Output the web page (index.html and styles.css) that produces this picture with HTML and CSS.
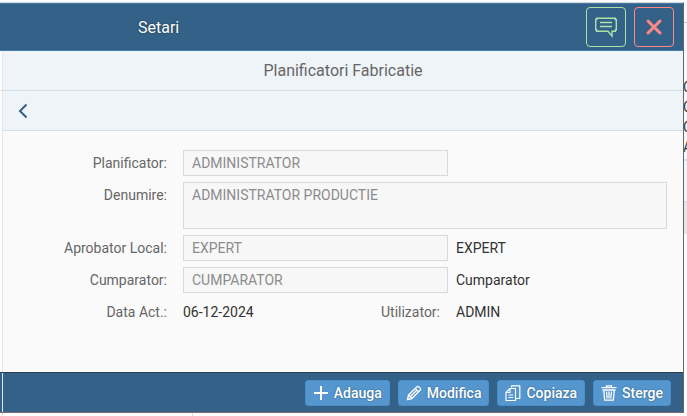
FILE: index.html
```html
<!DOCTYPE html>
<html lang="ro">
<head>
    <meta charset="UTF-8">
    <meta name="viewport" content="width=device-width, initial-scale=1.0">
    <title>Setari - Planificatori Fabricatie</title>
    <link rel="stylesheet" href="styles.css">
</head>
<body>
    <main class="dialog">
        <header class="dialog-header">
            <h1 class="dialog-title">Setari</h1>
            <div class="header-actions">
                <button class="icon-button message" type="button" aria-label="Mesaje">
                    <svg width="24" height="24" viewBox="0 0 24 24" fill="none" stroke="currentColor" stroke-width="1.4">
                        <path d="M2.7 3.2h18.6v1.3h1v10.500h-1v1.300h-3.300v4.700l-4-4.700H2.700v-1.300h-1V4.500h1z"/>
                        <path d="M6 7.500h12M6 11.500h12"/>
                    </svg>
                </button>
                <button class="icon-button close" type="button" aria-label="Inchide">
                    <svg width="24" height="24" viewBox="0 0 24 24" fill="none" stroke="currentColor" stroke-width="3" stroke-linecap="round">
                        <path d="M6 6l12 12M18 6L6 18"/>
                    </svg>
                </button>
            </div>
        </header>

        <div class="dialog-body">
            <div class="bar">
                <h2 class="bar-title">Planificatori Fabricatie</h2>
            </div>
            <nav class="bar nav-bar">
                <button class="back-button" type="button" aria-label="Inapoi">
                    <svg width="16" height="16" viewBox="0 0 16 16" fill="none" stroke="currentColor" stroke-width="2">
                        <path d="M11.500 1.500L5 8l6.500 6.500"/>
                    </svg>
                </button>
            </nav>

            <form class="form" id="planner">
                <div class="form-row">
                    <label for="planificator">Planificator:</label>
                    <input type="text" id="planificator" value="ADMINISTRATOR" disabled>
                </div>
                <div class="form-row">
                    <label for="denumire">Denumire:</label>
                    <textarea id="denumire" disabled>ADMINISTRATOR PRODUCTIE</textarea>
                </div>
                <div class="form-row">
                    <label for="aprobator">Aprobator Local:</label>
                    <input type="text" id="aprobator" value="EXPERT" disabled>
                    <span>EXPERT</span>
                </div>
                <div class="form-row">
                    <label for="cumparator">Cumparator:</label>
                    <input type="text" id="cumparator" value="CUMPARATOR" disabled>
                    <span>Cumparator</span>
                </div>
                <div class="form-row">
                    <span class="label">Data Act.:</span>
                    <div class="split">
                        <span>06-12-2024</span>
                        <span class="label">Utilizator:</span>
                    </div>
                    <span>ADMIN</span>
                </div>
            </form>
        </div>

        <footer class="dialog-footer">
            <div class="footer-actions">
                <button class="action" type="button">
                    <svg width="16" height="16" viewBox="0 0 16 16" fill="none" stroke="currentColor" stroke-width="2">
                        <path d="M8 1v14M1 8h14"/>
                    </svg>
                    Adauga
                </button>
                <button class="action" type="button">
                    <svg width="16" height="16" viewBox="0 0 16 16" fill="none" stroke="currentColor" stroke-width="1.3" stroke-linejoin="round">
                        <path d="M1.500 14.500l1-4.500 8.500-8.300q.8-.6 1.600 0l1.700 1.700q.6.8 0 1.600L6 13.500zM2.500 10L6 13.500M9.200 3.500l3.400 3.400M4.500 11.500l6-6"/>
                    </svg>
                    Modifica
                </button>
                <button class="action" type="button">
                    <svg width="16" height="16" viewBox="0 0 16 16" fill="none" stroke="currentColor" stroke-width="1.2" stroke-linejoin="round">
                        <path d="M5 3.500h5.500v12h-9.500V7.500zM5 3.500v4H1M3.500 10h4.500M3.500 12.500h4.500"/>
                        <path d="M6.500 2.500V.8H14.800v12.700H11"/>
                    </svg>
                    Copiaza
                </button>
                <button class="action" type="button">
                    <svg width="16" height="16" viewBox="0 0 16 16" fill="none" stroke="currentColor" stroke-width="1.3">
                        <path d="M.5 2.700h15M5.500 2.500V.8h5v1.700M1.500 5h13M2.700 5l1 10.200h8.600l1-10.200"/>
                        <path d="M5.500 6.500l.7 7M8 6.500v7M10.500 6.500l-.7 7"/>
                    </svg>
                    Sterge
                </button>
            </div>
        </footer>
    </main>

    <aside class="backdrop">
        <div class="backdrop-head"></div>
        <ul class="backdrop-list">
            <li>C</li>
            <li>C</li>
            <li>C</li>
            <li>A</li>
        </ul>
        <div class="backdrop-band"></div>
        <div class="backdrop-fill"></div>
    </aside>
</body>
</html>
```

FILE: styles.css
```css
* {
    margin: 0;
    padding: 0;
    box-sizing: border-box;
}

/* faint grid lines of the page behind the dialog */
body {
    min-height: 100vh;
    display: flex;
    background:
        linear-gradient(#ddd, #ddd) 0 90px / 2px 1px no-repeat,
        linear-gradient(#ddd, #ddd) 2px 100% / 1px 3px no-repeat,
        linear-gradient(#ddd, #ddd) 192px 100% / 1px 3px no-repeat,
        #fdfdfd;
    font-family: Roboto, Arial, sans-serif;
    font-size: 14px;
    color: #333;
}

button, input, textarea {
    font: inherit;
}

button {
    cursor: pointer;
}

svg {
    display: block;
}

.dialog {
    flex: 1;
    display: flex;
    flex-direction: column;
    margin: 2px 0 3px;
    border-top: 1px solid #d5d5d5;
    border-right: 1px solid #666;
    border-bottom: 1px solid #806a6a;
}

.dialog-header {
    height: 48px;
    display: flex;
    align-items: center;
    padding-right: 9px;
    background-color: #346187;
    border-top: 1px solid #427cac;
    border-bottom: 1px solid #427cac;
    color: #fff;
}

.dialog-title {
    flex: 1;
    padding-left: 138px;
    font-size: 16px;
    font-weight: 400;
    text-shadow: 0 0 2px rgba(0, 0, 0, 0.5);
}

.header-actions {
    display: flex;
    gap: 8px;
}

.icon-button {
    width: 40px;
    height: 40px;
    display: flex;
    align-items: center;
    justify-content: center;
    background: none;
    border: 1px solid currentColor;
    border-radius: 4px;
}

.message {
    color: #abe2ab;
}

.close {
    color: #ff8888;
}

.dialog-body {
    flex: 1;
    display: flex;
    flex-direction: column;
    margin-left: 2px;
    border-left: 1px solid #e5e5e5;
}

.bar {
    height: 40px;
    display: flex;
    align-items: center;
    justify-content: center;
    background-color: #eff4f8;
    border-bottom: 1px solid #d1e0ee;
}

.bar-title {
    font-size: 16px;
    font-weight: 400;
    color: #666;
}

.nav-bar {
    justify-content: flex-start;
    padding-left: 12px;
}

.back-button {
    background: none;
    border: none;
    color: #346187;
}

.form {
    flex: 1;
    display: flex;
    flex-direction: column;
    gap: 6px;
    padding: 19px 16px 16px 0;
    background-color: #fafafa;
}

.form-row {
    display: grid;
    grid-template-columns: 172px 265px 1fr;
    column-gap: 8px;
    line-height: 26px;
}

label, .label {
    color: #666;
}

.form-row > label, .form-row > .label {
    padding-right: 8px;
    text-align: right;
}

input, textarea {
    width: 100%;
    height: 26px;
    padding: 0 8px;
    background-color: #f7f7f7;
    border: 1px solid #d9d9d9;
    color: #8c8c8c;
}

textarea {
    grid-column: 2 / 4;
    display: block;
    height: 47px;
    line-height: 24px;
    resize: none;
    overflow: hidden;
}

.split {
    display: flex;
    justify-content: space-between;
    padding-right: 8px;
}

.dialog-footer {
    height: 40px;
    display: flex;
    padding-left: 2px;
    background-color: #346187;
    border-top: 1px solid #2c3e57;
}

.footer-actions {
    flex: 1;
    display: flex;
    align-items: center;
    justify-content: flex-end;
    gap: 8px;
    padding-right: 12px;
    border-left: 1px solid #e5e5e5;
}

.action {
    height: 26px;
    display: flex;
    align-items: center;
    gap: 5px;
    padding: 0 7px;
    background-color: #5496cd;
    border: 1px solid #4a8ecb;
    border-radius: 3px;
    color: #fff;
    font-weight: 500;
    text-shadow: 0 0 2px rgba(0, 0, 0, 0.4);
}

/* edge of the page that lies behind the dialog */
.backdrop {
    width: 3px;
    overflow: hidden;
    background: linear-gradient(#f5f9fd 160px, transparent 160px);
}

.backdrop-head {
    height: 77px;
    background: linear-gradient(#ccc, #ccc) 0 22px / 100% 1px no-repeat;
}

.backdrop-list {
    list-style: none;
    line-height: 20px;
    text-indent: -1px;
}

.backdrop-band {
    height: 44px;
    margin-top: 2px;
    border-top: 2px solid #d1e0ee;
    border-bottom: 2px solid #d1e0ee;
    background-color: #eff4f8;
}

.backdrop-fill {
    height: 31px;
    background-color: #e6e6e6;
}
```
